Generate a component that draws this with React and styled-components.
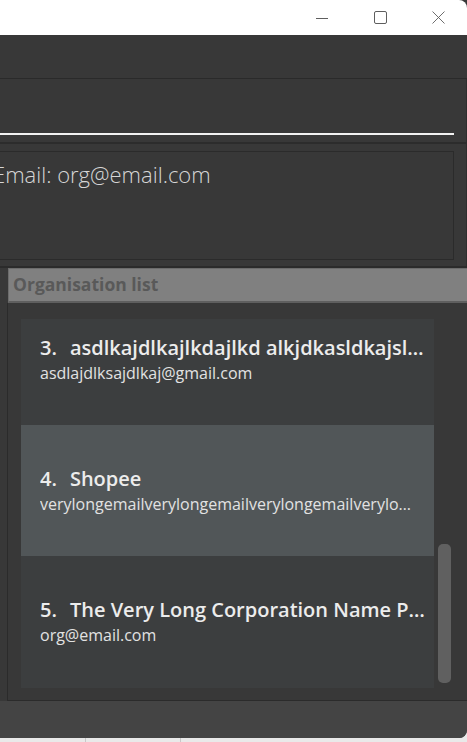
import React from "react";
import styled, { createGlobalStyle } from "styled-components";

const Global = createGlobalStyle`
  html, body { margin: 0; padding: 0; background: #e4e4e4; }
  * { box-sizing: border-box; }
`;

const Desktop = styled.div`
  width: 467px;
  height: 742px;
  overflow: hidden;
  background: #e9e9e9;
  display: flex;
  flex-direction: column;
  font-family: "Open Sans", "Noto Sans", sans-serif;
`;

const Window = styled.div`
  height: 738px;
  flex: none;
  display: flex;
  flex-direction: column;
  background: #383838;
  border-bottom-right-radius: 8px;
  overflow: hidden;
`;

const TitleBar = styled.div`
  height: 35px;
  flex: none;
  background: #ffffff;
  display: flex;
  justify-content: flex-end;
  border-top-right-radius: 8px;
`;

const CaptionButton = styled.div`
  width: 58px;
  height: 35px;
  display: flex;
  align-items: center;
  justify-content: center;
  color: #5e5e5e;
`;

const MenuBar = styled.div`
  height: 44px;
  flex: none;
  border-bottom: 1px solid #2a2a2a;
`;

const CommandSection = styled.div`
  flex: none;
  height: 63px;
  padding: 0 12px 0 0;
  border-right: 1px solid #2e2e2e;
`;

const CommandField = styled.div`
  height: 56px;
  border-bottom: 2px solid #f2f2f2;
`;

const ResultSection = styled.div`
  flex: none;
  height: 124px;
  border-top: 2px solid #2c2c2c;
  border-right: 1px solid #2e2e2e;
  padding: 7px 12px 6px 0;
`;

const ResultBox = styled.div`
  height: 109px;
  border: 1px solid #2b2b2b;
  border-left: none;
  padding: 7px 0 0 0;
  color: #d6d6d6;
  font-size: 22px;
  font-weight: 300;
  line-height: 30px;
  overflow: hidden;
`;

const ResultText = styled.div`
  margin-left: -7px;
  white-space: nowrap;
`;

const OrgSection = styled.div`
  flex: 1;
  display: flex;
  flex-direction: column;
  border-top: 2px solid #2b2b2b;
  padding-left: 7px;
`;

const ListHeader = styled.div`
  height: 35px;
  flex: none;
  background: #808080;
  border: 1px solid #6c6c6c;
  border-right: none;
  margin-left: 1px;
  border-bottom: 2px solid #5f5f5f;
  padding: 0 0 3px 4px;
  display: flex;
  align-items: center;
  color: #595959;
  font-weight: 700;
  font-size: 17.5px;
`;

const ListPanel = styled.div`
  height: 398px;
  flex: none;
  display: flex;
  border-left: 1px solid #2b2b2b;
  border-bottom: 1px solid #2b2b2b;
  background: #383838;
  padding: 16px 0 12px 13px;
`;

const Viewport = styled.div`
  width: 413px;
  height: 369px;
  overflow: hidden;
  display: flex;
  flex-direction: column;
`;

const Card = styled.div`
  height: ${(p) => p.$h}px;
  flex: none;
  background: ${(p) => (p.$odd ? "#515658" : "#3c3e3f")};
  display: flex;
  flex-direction: column;
  justify-content: center;
  padding: 0 8px 1px 19px;
  &:first-child { margin-top: -25px; }
`;

const CardTitle = styled.div`
  color: #ececec;
  font-size: 20px;
  font-weight: 600;
  line-height: 28px;
  white-space: nowrap;
  overflow: hidden;
  text-overflow: ellipsis;
`;

const Index = styled.span`
  margin-right: 13px;
`;

const CardEmail = styled.div`
  color: #e2e2e2;
  font-size: 16px;
  line-height: 23px;
  white-space: nowrap;
  overflow: hidden;
  text-overflow: ellipsis;
  padding-right: 6px;
`;

const ScrollTrack = styled.div`
  width: 13px;
  margin-left: 4px;
  height: 369px;
  display: flex;
  flex-direction: column;
`;

const ScrollThumb = styled.div`
  width: 13px;
  background: #606060;
  border-radius: 5px;
`;

const StatusBar = styled.div`
  flex: 1;
  background: #444444;
`;

const Taskbar = styled.div`
  flex: 1;
  display: flex;
  background: #e9e9e9;
`;

const TaskCell = styled.div`
  width: ${(p) => p.$w}px;
  border-right: 1px solid #c8c8c8;
`;

const orgs = [
  { n: 3, name: "asdlkajdlkajlkdajlkd alkjdkasldkajsldkajsldkj", email: "asdlajdlksajdlkaj@gmail.com", h: 131 },
  { n: 4, name: "Shopee", email: "verylongemailverylongemailverylongemailverylongemail@email.com", h: 131 },
  { n: 5, name: "The Very Long Corporation Name Pte Ltd", email: "org@email.com", h: 132 },
];

export default function App() {
  return (
    <Desktop>
      <Global />
      <Window>
        <TitleBar>
          <CaptionButton>
            <svg width="12" height="12" viewBox="0 0 12 12">
              <line x1="0" y1="6.5" x2="12" y2="6.5" stroke="currentColor" strokeWidth="1" />
            </svg>
          </CaptionButton>
          <CaptionButton>
            <svg width="13" height="13" viewBox="0 0 13 13">
              <rect x="0.5" y="0.5" width="12" height="12" rx="1.5" fill="none" stroke="currentColor" strokeWidth="1" />
            </svg>
          </CaptionButton>
          <CaptionButton>
            <svg width="13" height="13" viewBox="0 0 13 13">
              <path d="M0.5 0.5 L12.5 12.5 M12.5 0.5 L0.5 12.5" stroke="currentColor" strokeWidth="0.9" fill="none" />
            </svg>
          </CaptionButton>
        </TitleBar>
        <MenuBar />
        <CommandSection>
          <CommandField />
        </CommandSection>
        <ResultSection>
          <ResultBox>
            <ResultText>Email: org@email.com</ResultText>
          </ResultBox>
        </ResultSection>
        <OrgSection>
          <ListHeader>Organisation list</ListHeader>
          <ListPanel>
            <Viewport>
              {orgs.map((o, i) => (
                <Card key={o.n} $h={o.h} $odd={i === 1}>
                  <CardTitle>
                    <Index>{o.n}.</Index>
                    {o.name}
                  </CardTitle>
                  <CardEmail>{o.email}</CardEmail>
                </Card>
              ))}
            </Viewport>
            <ScrollTrack>
              <ScrollThumb style={{ marginTop: 225, height: 139 }} />
            </ScrollTrack>
          </ListPanel>
        </OrgSection>
        <StatusBar />
      </Window>
      <Taskbar>
        <TaskCell $w={86} />
        <TaskCell $w={95} />
      </Taskbar>
    </Desktop>
  );
}
